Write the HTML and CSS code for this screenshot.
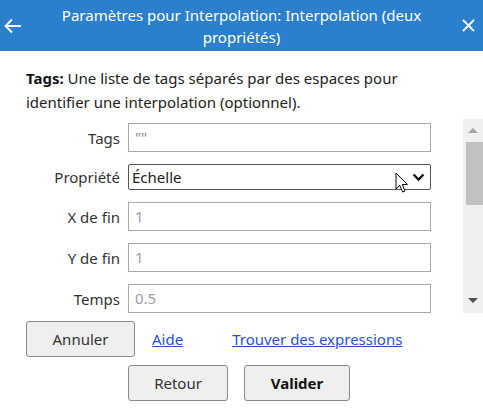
FILE: index.html
```html
<!DOCTYPE html>
<html lang="fr">
<head>
<meta charset="utf-8">
<title>Paramètres pour Interpolation</title>
<link rel="stylesheet" href="styles.css">
</head>
<body>
<div class="dialog">
  <header class="titlebar">
    <button class="icon-btn back" aria-label="Retour">
      <svg width="18" height="16" viewBox="0 0 18 16"><path d="M8 1.5 L1.5 8 L8 14.5 M1.5 8 H17" fill="none" stroke="#fff" stroke-width="1.8"/></svg>
    </button>
    <h1 class="title">Paramètres pour Interpolation: Interpolation (deux propriétés)</h1>
    <button class="icon-btn close" aria-label="Fermer">
      <svg width="13" height="13" viewBox="0 0 13 13"><path d="M1 1 L12 12 M12 1 L1 12" fill="none" stroke="#fff" stroke-width="1.8"/></svg>
    </button>
  </header>

  <p class="desc"><b>Tags:</b> Une liste de tags séparés par des espaces pour identifier une interpolation (optionnel).</p>

  <div class="scroller">
    <div class="form">
      <div class="row"><label>Tags</label><div class="field">""</div></div>
      <div class="row"><label>Propriété</label><div class="field select">Échelle
        <svg class="chev" width="13" height="9" viewBox="0 0 13 9"><path d="M1.5 1.5 L6.5 6.5 L11.5 1.5" fill="none" stroke="#111" stroke-width="2.4"/></svg>
        <svg class="cursor" width="14" height="22" viewBox="0 0 14 22"><path d="M1 1 V17 L4.8 13.4 L7.6 20 L10 19 L7.3 12.6 L12.4 12.4 Z" fill="#fff" stroke="#000" stroke-width="1"/></svg>
      </div></div>
      <div class="row"><label>X de fin</label><div class="field val">1</div></div>
      <div class="row"><label>Y de fin</label><div class="field val">1</div></div>
      <div class="row"><label>Temps</label><div class="field val">0.5</div></div>
    </div>
    <div class="scrollbar">
      <div class="arrow up"></div>
      <div class="track"><div class="thumb"></div></div>
      <div class="arrow down"></div>
    </div>
  </div>

  <div class="actions">
    <div class="line1">
      <button class="btn cancel">Annuler</button>
      <a class="link aide" href="#">Aide</a>
      <a class="link" href="#">Trouver des expressions</a>
    </div>
    <div class="line2">
      <button class="btn retour">Retour</button>
      <button class="btn valider">Valider</button>
    </div>
  </div>
</div>
</body>
</html>
```

FILE: styles.css
```css
html, body {
  margin: 0;
  padding: 0;
  background: #fff;
}
body {
  font-family: "Noto Sans", "Open Sans", sans-serif;
  color: #222;
  width: 483px;
  height: 414px;
  overflow: hidden;
}
.dialog {
  display: flex;
  flex-direction: column;
  height: 414px;
}
.titlebar {
  display: flex;
  align-items: center;
  height: 51px;
  background: #2b7fcc;
  color: #fff;
}
.icon-btn {
  background: none;
  border: 0;
  padding: 0;
  display: flex;
  align-items: center;
  justify-content: center;
  width: 40px;
  height: 51px;
}
.back { justify-content: flex-start; padding-left: 4px; width: 44px; }
.close { justify-content: flex-end; padding-right: 8px; width: 44px; }
.title {
  flex: 1;
  margin: 0 8px;
  font-size: 15px;
  font-weight: normal;
  line-height: 22px;
  text-align: center;
}
.desc {
  margin: 15px 0 0 0;
  padding: 0 60px 0 26px;
  font-size: 15px;
  line-height: 24px;
  color: #222;
}
.desc b { color: #111; }
.scroller {
  display: flex;
  height: 194px;
  margin-top: 5px;
  overflow: hidden;
}
.form {
  flex: 1;
  padding-top: 4px;
  display: flex;
  flex-direction: column;
  gap: 12px;
}
.row {
  display: flex;
  align-items: center;
}
.row label {
  width: 120px;
  text-align: right;
  font-size: 15px;
  color: #333;
  margin-right: 8px;
}
.field {
  box-sizing: border-box;
  width: 303px;
  height: 29px;
  border: 1px solid #a9a9a9;
  padding: 0 6px;
  font-size: 15px;
  line-height: 27px;
  color: #888;
  position: relative;
}
.field.val { color: #a397ad; }
.field.select {
  height: 26px;
  line-height: 24px;
  border-color: #555;
  border-radius: 2px;
  color: #222;
  padding-left: 3px;
}
.chev {
  position: absolute;
  right: 5px;
  top: 8px;
}
.cursor {
  position: absolute;
  left: 266px;
  top: 7px;
}
.scrollbar {
  width: 20px;
  background: #f0f0f0;
  display: flex;
  flex-direction: column;
  align-items: center;
}
.arrow {
  width: 0;
  height: 0;
  margin: 9px 0 7px;
  border-left: 5px solid transparent;
  border-right: 5px solid transparent;
}
.arrow.up { border-bottom: 5px solid #a3a3a3; }
.arrow.down { border-top: 5px solid #505050; margin: 0 0 10px; }
.track {
  flex: 1;
  width: 100%;
  display: flex;
  justify-content: flex-end;
}
.thumb {
  width: 17px;
  height: 63px;
  background: #c1c1c1;
  margin-top: 2px;
}
.actions {
  display: flex;
  flex-direction: column;
  gap: 8px;
  margin-top: 8px;
}
.line1 {
  display: flex;
  align-items: center;
  padding-left: 26px;
}
.line2 {
  display: flex;
  padding-left: 128px;
  gap: 16px;
}
.btn {
  font-family: inherit;
  font-size: 15px;
  color: #333;
  background: #efefef;
  border: 1px solid #8a8a8a;
  border-radius: 3px;
  height: 36px;
  padding: 0;
}
.cancel { width: 109px; }
.retour { width: 100px; }
.valider { width: 106px; font-weight: bold; color: #111; }
.link {
  color: #2b4fe0;
  font-size: 15px;
  text-decoration: underline;
}
.aide { margin-left: 17px; margin-right: 49px; }
```
